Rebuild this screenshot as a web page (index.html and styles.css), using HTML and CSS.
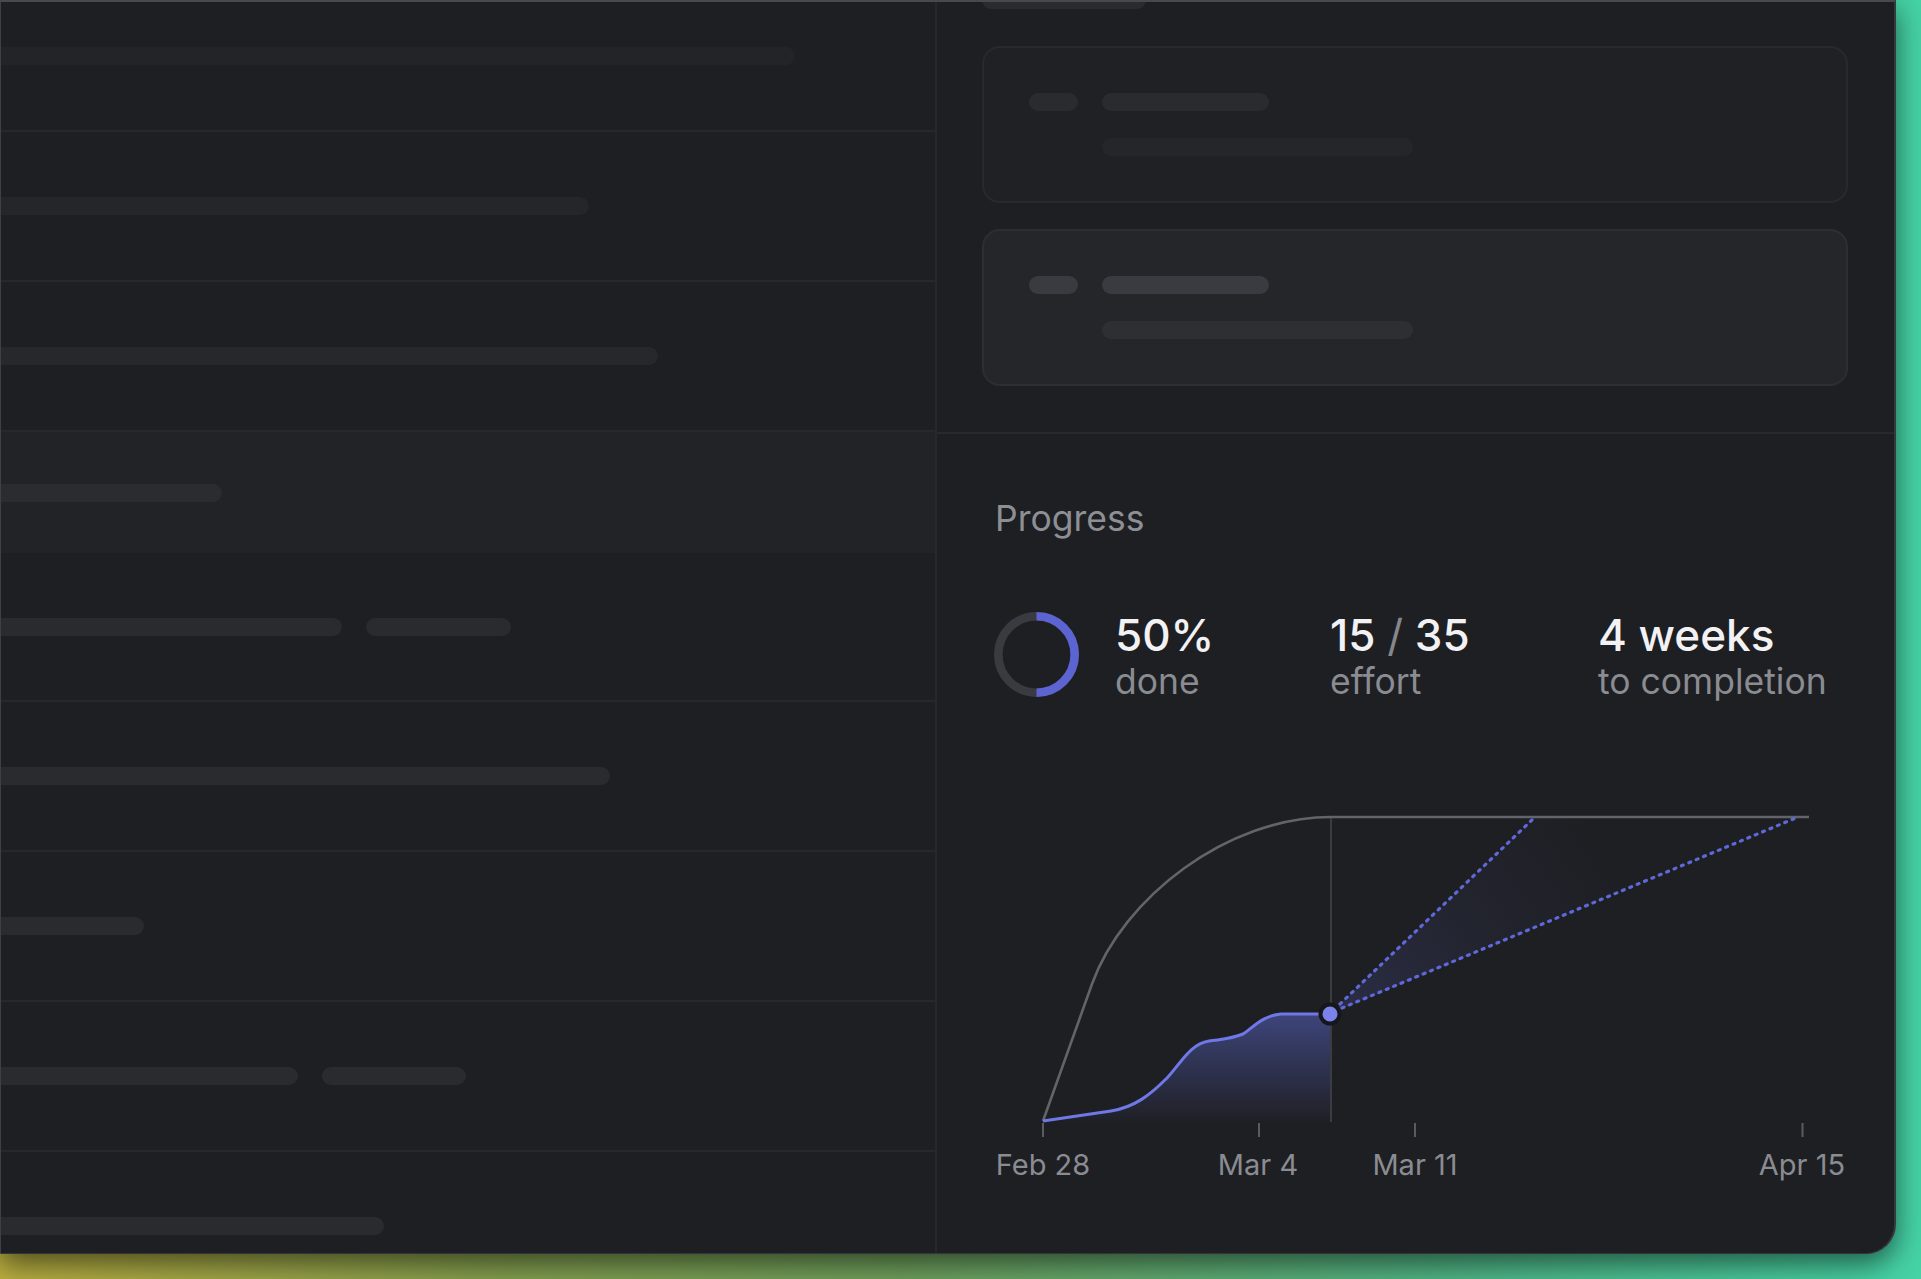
FILE: index.html
```html
<!DOCTYPE html>
<html lang="en">
<head>
<meta charset="utf-8">
<title>Progress</title>
<link rel="stylesheet" href="styles.css">
</head>
<body>
<div class="panel">
  <div class="list">
    <div class="row row-first"><span class="bar tone1" style="width:794px"></span></div>
    <div class="row"><span class="bar tone2" style="width:588px"></span></div>
    <div class="row"><span class="bar tone3" style="width:657px"></span></div>
    <div class="row row-active"><span class="bar tone4" style="width:221px"></span></div>
    <div class="row row-b"><span class="bar" style="width:341px"></span><span class="bar pill" style="width:145px"></span></div>
    <div class="row"><span class="bar" style="width:609px"></span></div>
    <div class="row"><span class="bar" style="width:143px"></span></div>
    <div class="row"><span class="bar" style="width:297px"></span><span class="bar pill" style="width:144px"></span></div>
    <div class="row"><span class="bar" style="width:383px"></span></div>
  </div>
  <div class="detail">
    <div class="cards">
      <span class="top-pill"></span>
      <div class="card">
        <div class="card-line"><span class="sk sk-s"></span><span class="sk sk-m"></span></div>
        <div class="card-sub"><span class="sk sk-l sk-dim"></span></div>
      </div>
      <div class="card card-hover">
        <div class="card-line"><span class="sk sk-s"></span><span class="sk sk-m"></span></div>
        <div class="card-sub"><span class="sk sk-l sk-dim"></span></div>
      </div>
    </div>
    <div class="progress">
      <h2 class="title">Progress</h2>
      <div class="stats">
        <svg class="donut" width="85" height="85" viewBox="0 0 85 85">
          <circle cx="42.5" cy="42.5" r="38.2" fill="none" stroke="#393b40" stroke-width="8.6"/>
          <path d="M42.5 4.3 A38.2 38.2 0 0 1 42.5 80.7" fill="none" stroke="#5b64d0" stroke-width="8.6"/>
        </svg>
        <div class="stat stat-a"><div class="val">50%</div><div class="lbl">done</div></div>
        <div class="stat stat-b"><div class="val">15 <span class="slash">/</span> 35</div><div class="lbl">effort</div></div>
        <div class="stat"><div class="val">4 weeks</div><div class="lbl">to completion</div></div>
      </div>
      <svg class="chart" width="899" height="400" viewBox="0 0 899 400">
        <defs>
          <linearGradient id="fillDone" x1="0" y1="224" x2="0" y2="331" gradientUnits="userSpaceOnUse">
            <stop offset="0" stop-color="#5e6ad2" stop-opacity="0.5"/>
            <stop offset="1" stop-color="#5e6ad2" stop-opacity="0.02"/>
          </linearGradient>
          <linearGradient id="fillFan" x1="335" y1="224" x2="600" y2="40" gradientUnits="userSpaceOnUse">
            <stop offset="0" stop-color="#5e6ad2" stop-opacity="0.2"/>
            <stop offset="0.5" stop-color="#5e6ad2" stop-opacity="0.07"/>
            <stop offset="1" stop-color="#5e6ad2" stop-opacity="0"/>
          </linearGradient>
        </defs>
        <polygon points="335,224 540,27 803,27" fill="url(#fillFan)"/>
        <path d="M48 331 L116 321 C140 317 155 305 172 288 C186 273 195 254 214 251 C228 249 236 249 248 244 C258 238 266 226 286 224 L336 224 L336 331 Z" fill="url(#fillDone)"/>
        <line x1="336" y1="27" x2="336" y2="332" stroke="#3b3c40" stroke-width="2"/>
        <path d="M48 331 L97 194 C128 108 232 27 336 27 L814 27" fill="none" stroke="#636469" stroke-width="2.6"/>
        <path d="M48 331 L116 321 C140 317 155 305 172 288 C186 273 195 254 214 251 C228 249 236 249 248 244 C258 238 266 226 286 224 L334 224" fill="none" stroke="#6f78e6" stroke-width="3"/>
        <line x1="345" y1="214" x2="540" y2="27" stroke="#5e68d8" stroke-width="3.2" stroke-dasharray="2 6" stroke-linecap="round"/>
        <line x1="347" y1="218" x2="803" y2="27" stroke="#5e68d8" stroke-width="3.2" stroke-dasharray="2 6" stroke-linecap="round"/>
        <circle cx="335" cy="224" r="9.5" fill="#7b83eb" stroke="#16171a" stroke-width="4"/>
        <g stroke="#5a5b60" stroke-width="2">
          <line x1="48" y1="333" x2="48" y2="347"/>
          <line x1="264" y1="333" x2="264" y2="347"/>
          <line x1="420" y1="333" x2="420" y2="347"/>
          <line x1="807.5" y1="333" x2="807.5" y2="347"/>
        </g>
        <g class="axis">
          <text x="48" y="385" text-anchor="middle">Feb 28</text>
          <text x="263" y="385" text-anchor="middle">Mar 4</text>
          <text x="420" y="385" text-anchor="middle">Mar 11</text>
          <text x="807" y="385" text-anchor="middle">Apr 15</text>
        </g>
      </svg>
    </div>
  </div>
</div>
</body>
</html>
```
FILE: styles.css
```css
* { box-sizing: border-box; }
html, body { margin: 0; padding: 0; }
body {
  width: 1921px;
  height: 1279px;
  overflow: hidden;
  background: linear-gradient(90deg, #b9ae40 0%, #859f4e 25%, #6e9f5c 47%, #50b585 75%, #45d2a5 100%);
  font-family: Inter, "Noto Sans", sans-serif;
}
.panel {
  width: 1896px;
  height: 1254px;
  display: flex;
  overflow: hidden;
  background: #1e1f23;
  border-top: 2px solid #48494e;
  border-left: 1px solid #3f4045;
  border-right: 2px solid #37383c;
  border-bottom: 1px solid #34353a;
  border-radius: 0 0 30px 0;
  box-shadow: 0 10px 28px rgba(0, 0, 0, 0.55);
}
.list {
  width: 936px;
  flex: none;
  border-right: 2px solid #27282c;
  display: flex;
  flex-direction: column;
}
.row {
  flex: none;
  height: 150px;
  display: flex;
  align-items: center;
  gap: 24px;
  border-bottom: 2px solid #27282c;
}
.row-first { height: 130px; padding-bottom: 20px; }
.row-active { height: 121px; background: #222327; border-bottom: none; }
.row-b { height: 149px; }
.bar {
  display: block;
  height: 18px;
  flex: none;
  background: #2a2b2f;
  border-radius: 0 9px 9px 0;
}
.bar.pill { border-radius: 9px; }
.bar.tone1 { background: #232428; }
.bar.tone2 { background: #25262a; }
.bar.tone3 { background: #27282c; }
.bar.tone4 { background: #2b2c30; }

.detail {
  flex: 1;
  display: flex;
  flex-direction: column;
}
.cards {
  padding: 0 46px 46px 45px;
  border-bottom: 2px solid #28292d;
}
.top-pill {
  display: block;
  width: 164px;
  height: 18px;
  margin-top: -11px;
  border-radius: 9px;
  background: #2a2b2f;
}
.card {
  height: 157px;
  margin-top: 37px;
  border: 2px solid #28292d;
  border-radius: 18px;
  background: #202125;
  padding: 45px 0 0 45px;
}
.card + .card { margin-top: 26px; }
.card-line { display: flex; gap: 24px; }
.card-sub { margin-top: 27px; padding-left: 73px; display: flex; }
.sk { display: block; height: 18px; border-radius: 9px; background: #2a2b2f; }
.sk-s { width: 49px; }
.sk-m { width: 167px; }
.sk-l { width: 311px; }
.sk-dim { background: #25262a; }
.card-hover { background: #25262a; border-color: #2d2e32; }
.card-hover .sk { background: #3a3b40; }
.card-hover .sk-dim { background: #2e2f33; }

.progress { padding: 65px 0 0 58px; }
.title {
  margin: 0;
  font-size: 35.5px;
  line-height: 40px;
  font-weight: 400;
  color: #8d8f95;
}
.stats {
  margin-top: 72px;
  display: flex;
  align-items: flex-start;
}
.donut { display: block; flex: none; margin-top: 1px; margin-left: -1px; margin-right: 36px; }
.stat { flex: none; }
.stat-a { width: 215px; }
.stat-b { width: 268px; }
.val {
  font-size: 44px;
  line-height: 48px;
  font-weight: 500;
  color: #f2f2f4;
  white-space: nowrap;
}
.slash { color: #85878d; font-weight: 400; }
.lbl {
  font-size: 35.5px;
  line-height: 46px;
  color: #8a8c92;
  white-space: nowrap;
}
.chart { display: block; margin-top: 85px; overflow: visible; }
.axis text {
  font-family: Inter, "Noto Sans", sans-serif;
  font-size: 29px;
  fill: #8a8c92;
}
```
